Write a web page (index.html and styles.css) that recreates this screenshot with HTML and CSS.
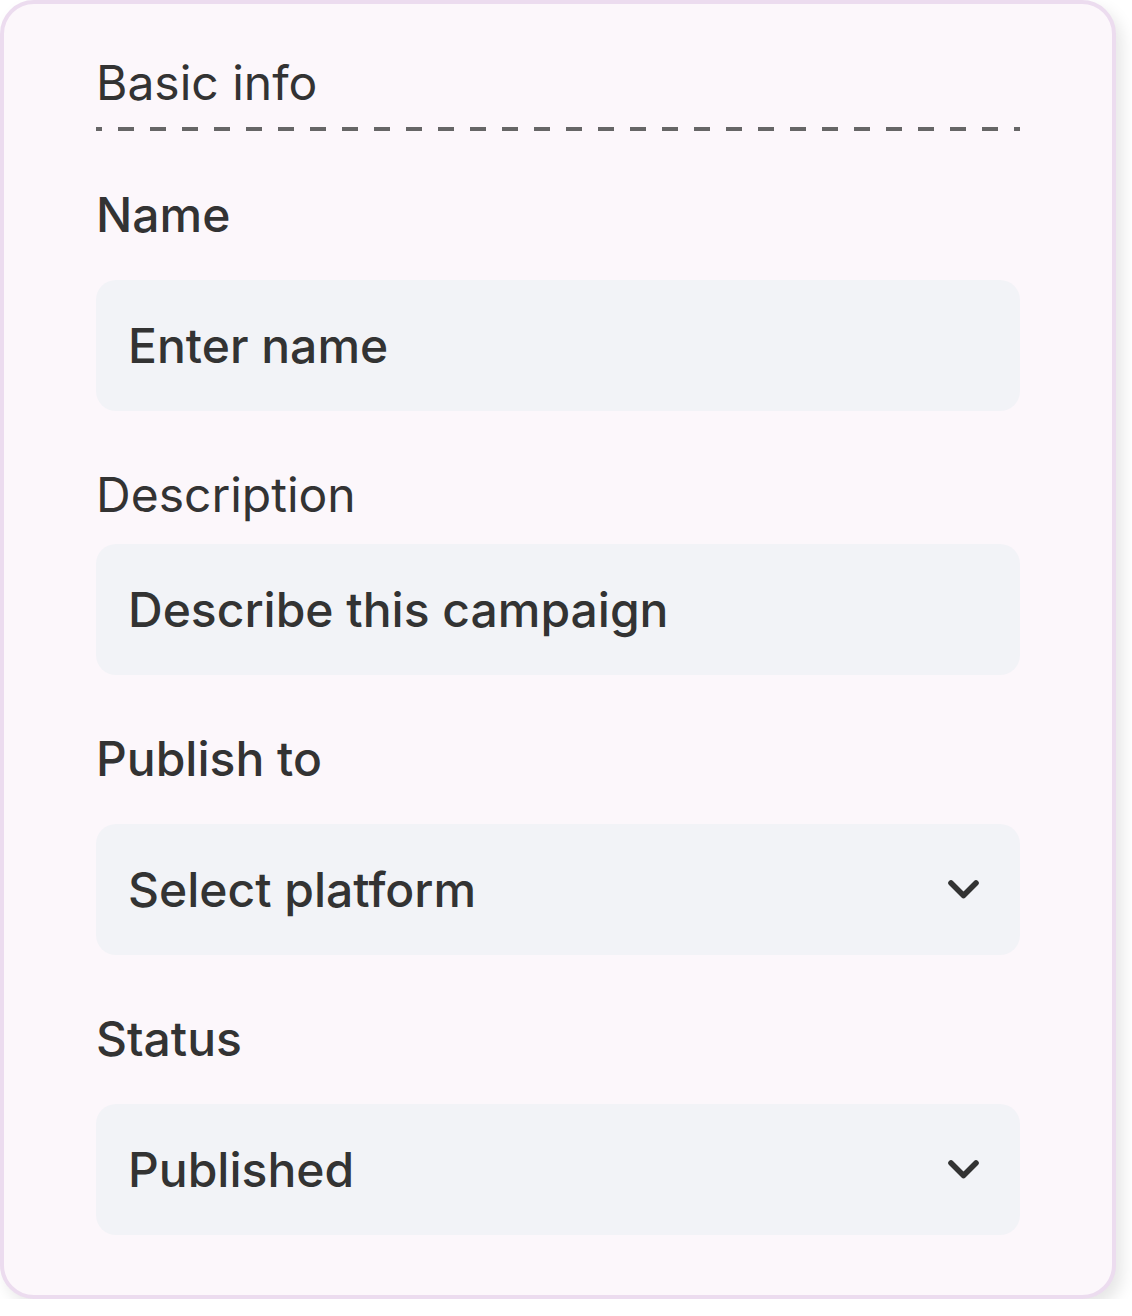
FILE: index.html
```html
<!DOCTYPE html>
<html lang="en">
<head>
<meta charset="utf-8">
<title>Basic info</title>
<link rel="stylesheet" href="styles.css">
</head>
<body>
<form class="card">
  <h2 class="card-title">Basic info</h2>
  <div class="dashed-rule"></div>

  <div class="field">
    <label class="label label-strong">Name</label>
    <div class="input"><span class="input-text">Enter name</span></div>
  </div>

  <div class="field field-desc">
    <label class="label label-regular">Description</label>
    <div class="input"><span class="input-text">Describe this campaign</span></div>
  </div>

  <div class="field">
    <label class="label label-strong">Publish to</label>
    <div class="input select"><span class="input-text">Select platform</span>
      <svg class="chevron" width="31" height="19" viewBox="0 0 31 19" aria-hidden="true"><polyline points="3,3 15.5,15.5 28,3" fill="none" stroke="#333333" stroke-width="5.6" stroke-linecap="round" stroke-linejoin="round"/></svg>
    </div>
  </div>

  <div class="field">
    <label class="label label-strong">Status</label>
    <div class="input select"><span class="input-text">Published</span>
      <svg class="chevron" width="31" height="19" viewBox="0 0 31 19" aria-hidden="true"><polyline points="3,3 15.5,15.5 28,3" fill="none" stroke="#333333" stroke-width="5.6" stroke-linecap="round" stroke-linejoin="round"/></svg>
    </div>
  </div>
</form>
</body>
</html>
```

FILE: styles.css
```css
html, body {
  margin: 0;
  padding: 0;
  background: #ffffff;
}

body {
  font-family: Inter, "Noto Sans", sans-serif;
  color: #333333;
}

.card {
  box-sizing: border-box;
  width: 1116px;
  margin: 0;
  padding: 50px 92px 60px 92px;
  background: #fcf7fb;
  border: 4px solid #ecdcef;
  border-radius: 34px;
  box-shadow: 6px 8px 16px rgba(0, 0, 0, 0.1);
  display: flex;
  flex-direction: column;
}

.card-title {
  margin: 0;
  font-size: 48px;
  line-height: 58px;
  font-weight: 400;
  color: #333333;
}

.dashed-rule {
  margin-top: 15px;
  height: 4px;
  background: repeating-linear-gradient(90deg,
    #666666 0, #666666 6px,
    transparent 6px, transparent 22px,
    #666666 22px, #666666 32px);
}

.field {
  display: flex;
  flex-direction: column;
  gap: 36px;
  margin-top: 55px;
}

.field-desc {
  gap: 20px;
}

.label {
  font-size: 48px;
  line-height: 58px;
  color: #333333;
}

.label-strong {
  font-weight: 500;
}

.label-regular {
  font-weight: 400;
}

.input {
  box-sizing: border-box;
  height: 131px;
  padding: 0 41px 0 32px;
  background: #f2f3f7;
  border-radius: 20px;
  display: flex;
  align-items: center;
  justify-content: space-between;
}

.input-text {
  font-size: 48px;
  line-height: 58px;
  font-weight: 500;
  color: #333333;
}

.chevron {
  flex: none;
}
```
